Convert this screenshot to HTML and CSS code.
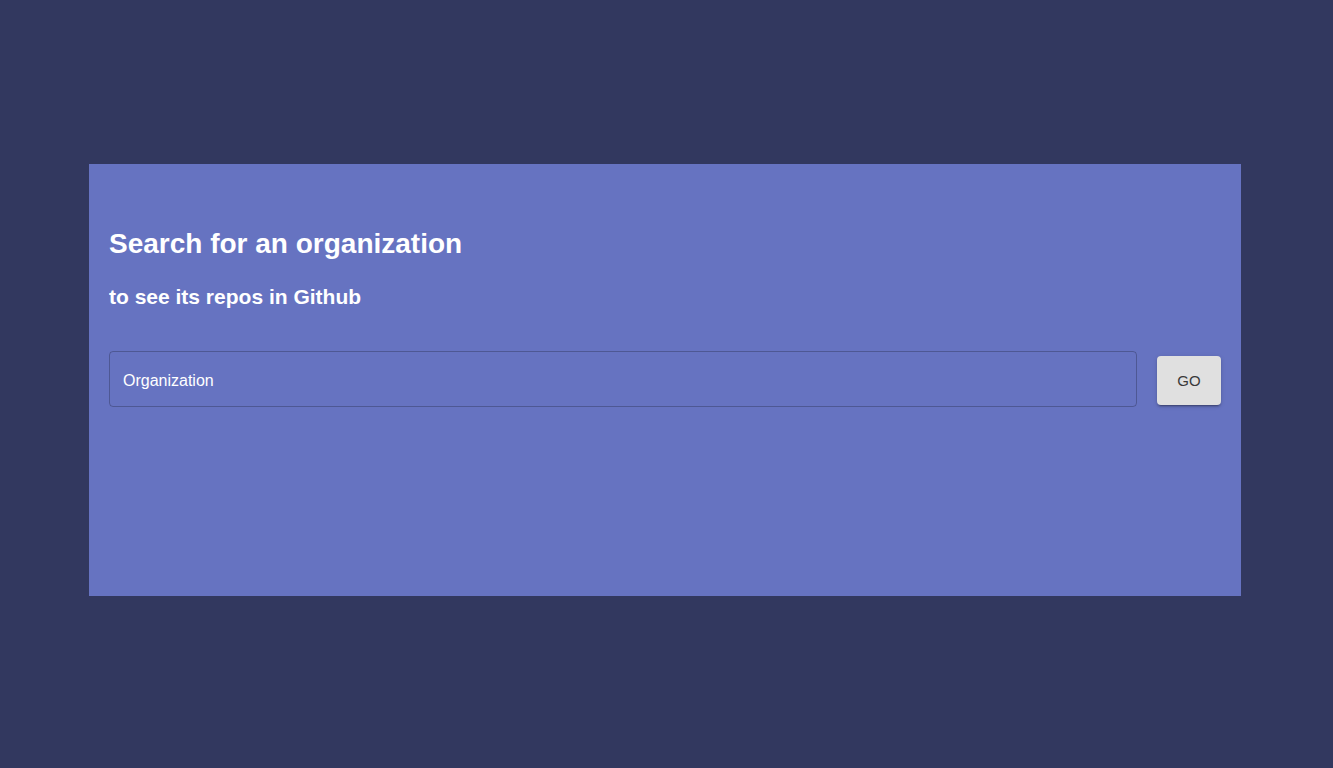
FILE: index.html
```html
<!DOCTYPE html>
<html lang="en">
<head>
<meta charset="utf-8">
<title>Search</title>
<link rel="stylesheet" href="styles.css">
</head>
<body>
<main class="card">
  <h2 class="title">Search for an organization</h2>
  <h3 class="subtitle">to see its repos in Github</h3>
  <form class="search">
    <div class="field">
      <input class="input" type="text" placeholder="Organization">
    </div>
    <button class="go" type="button">GO</button>
  </form>
</main>
</body>
</html>
```
FILE: styles.css
```css
html, body {
  margin: 0;
  padding: 0;
}
body {
  background: #32385f;
  font-family: "Liberation Sans", Arial, sans-serif;
  color: #fff;
  padding-top: 164px;
  height: 604px;
}
.card {
  box-sizing: border-box;
  width: 1152px;
  height: 432px;
  margin: 0 0 0 89px;
  background: #6673c1;
  padding: 64px 20px 0;
}
.title {
  margin: 0;
  font-size: 28px;
  font-weight: bold;
  line-height: 32px;
}
.subtitle {
  margin: 25px 0 0;
  font-size: 21px;
  font-weight: bold;
  line-height: 24px;
}
.search {
  margin-top: 42px;
  display: flex;
  align-items: center;
  gap: 20px;
}
.field {
  flex: 1;
}
.input {
  box-sizing: border-box;
  width: 100%;
  height: 56px;
  border: 1px solid rgba(0, 0, 0, 0.23);
  border-radius: 4px;
  background: transparent;
  padding: 3px 14px 0 13px;
  font-family: "Liberation Sans", Arial, sans-serif;
  font-size: 16px;
  color: #fff;
  outline: none;
}
.input::placeholder {
  color: #fff;
  opacity: 1;
}
.go {
  width: 64px;
  height: 49px;
  margin-top: 3px;
  padding: 0;
  border: none;
  border-radius: 4px;
  background: #e0e0e0;
  color: #3a3a3a;
  font-family: "Liberation Sans", Arial, sans-serif;
  font-size: 15px;
  font-weight: 400;
  box-shadow: 0 3px 1px -2px rgba(0,0,0,0.2), 0 2px 2px 0 rgba(0,0,0,0.14), 0 1px 5px 0 rgba(0,0,0,0.12);
  cursor: pointer;
}
```
